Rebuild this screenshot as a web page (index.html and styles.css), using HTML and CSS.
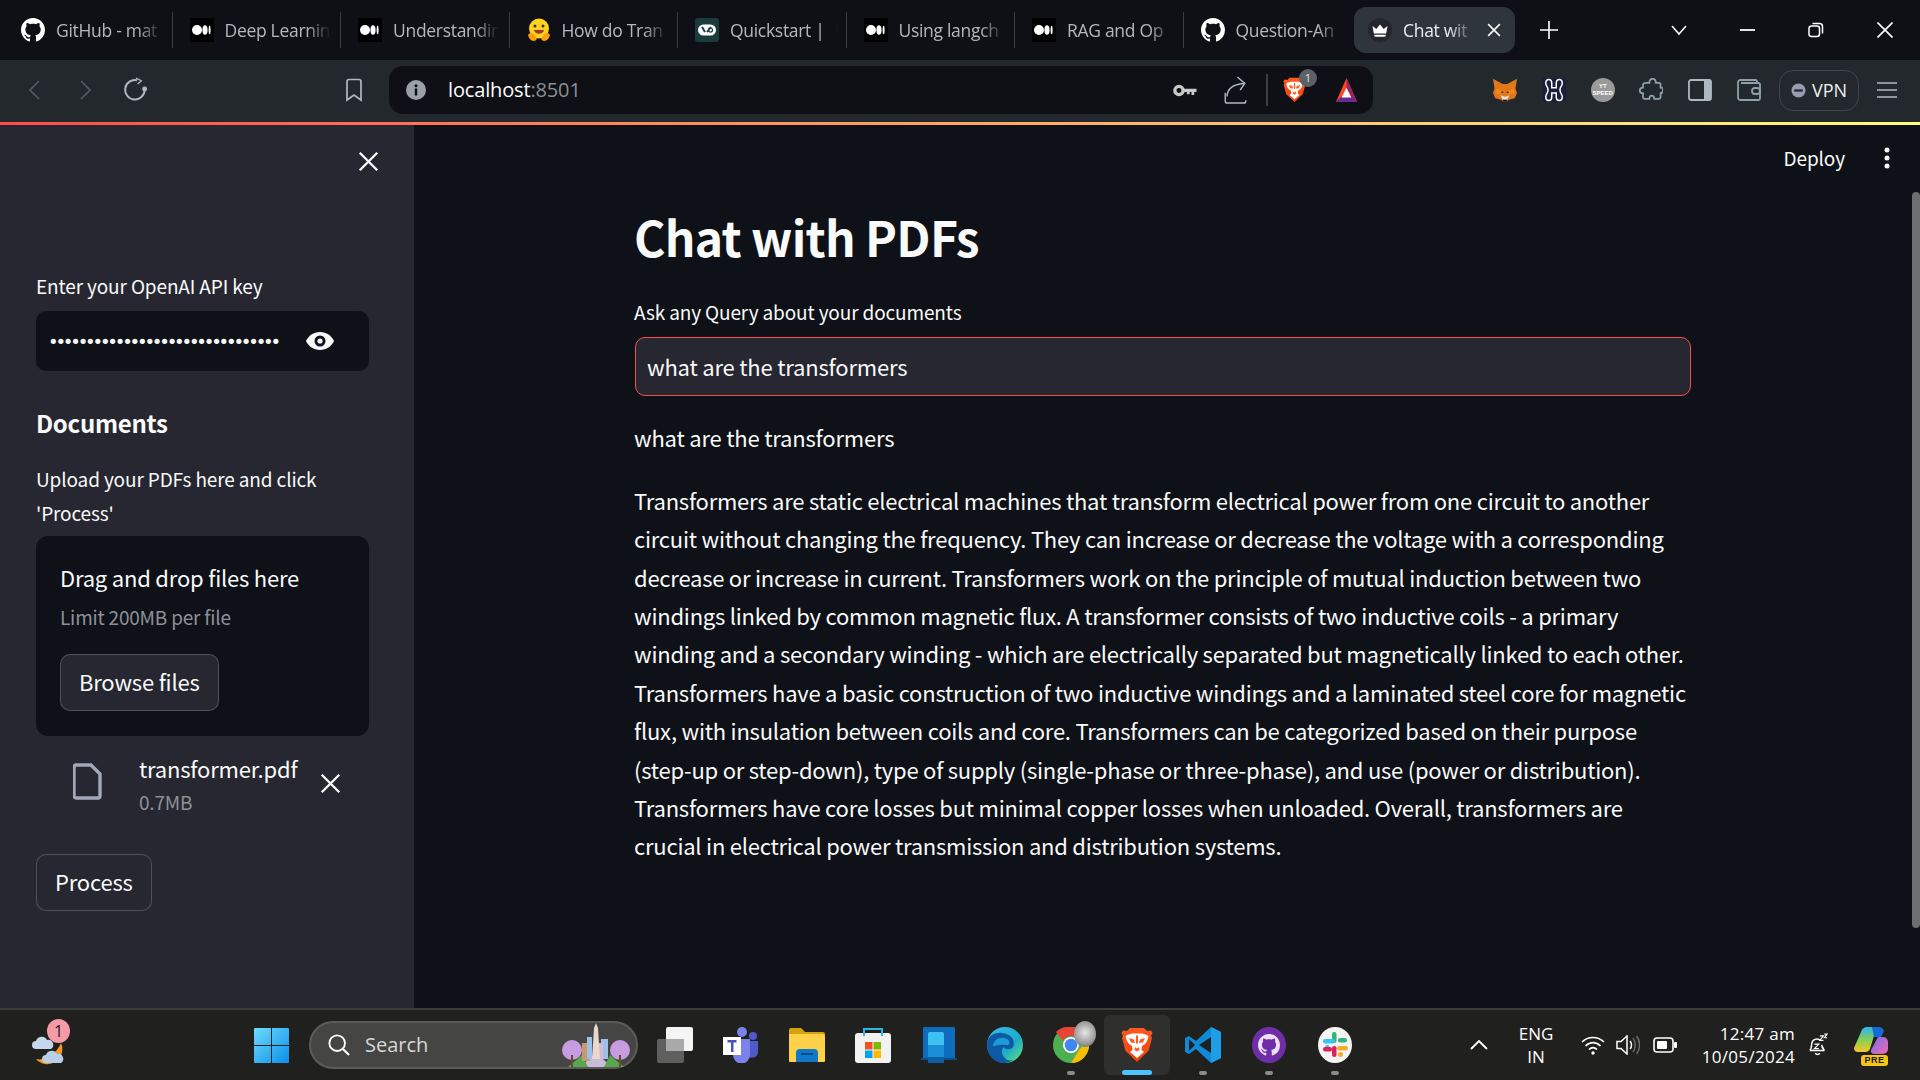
FILE: index.html
```html
<!DOCTYPE html>
<html lang="en">
<head>
<meta charset="utf-8">
<title>Chat with PDFs</title>
<link rel="stylesheet" href="styles.css">
</head>
<body>
<svg class="defs" aria-hidden="true">
  <defs>
    <symbol id="gh" viewBox="0 0 16 16"><path fill="currentColor" d="M8 0C3.58 0 0 3.58 0 8c0 3.54 2.29 6.53 5.47 7.59.4.07.55-.17.55-.38 0-.19-.01-.82-.01-1.49-2.01.37-2.53-.49-2.69-.94-.09-.23-.48-.94-.82-1.13-.28-.15-.68-.52-.01-.53.63-.01 1.08.58 1.23.82.72 1.21 1.87.87 2.33.66.07-.52.28-.87.51-1.07-1.78-.2-3.64-.89-3.64-3.95 0-.87.31-1.59.82-2.15-.08-.2-.36-1.02.08-2.12 0 0 .67-.21 2.2.82.64-.18 1.32-.27 2-.27.68 0 1.36.09 2 .27 1.53-1.04 2.2-.82 2.2-.82.44 1.1.16 1.92.08 2.12.51.56.82 1.27.82 2.15 0 3.07-1.87 3.75-3.65 3.95.29.25.54.73.54 1.48 0 1.07-.01 1.93-.01 2.2 0 .21.15.46.55.38A8.013 8.013 0 0016 8c0-4.42-3.58-8-8-8z"/></symbol>
    <symbol id="medium" viewBox="0 0 24 24"><rect width="24" height="24" fill="#000"/><circle cx="7" cy="12" r="5" fill="#fff"/><ellipse cx="15" cy="12" rx="2.6" ry="4.8" fill="#fff"/><ellipse cx="19.6" cy="12" rx="1" ry="4.3" fill="#fff"/></symbol>
    <symbol id="close" viewBox="0 0 18 18"><path d="M1.500 1.500l15 15M16.500 1.500l-15 15" stroke="currentColor" stroke-width="2" fill="none"/></symbol>
    <symbol id="brave" viewBox="0 0 32 36">
      <defs><linearGradient id="bg1" x1="0" y1="0" x2="0" y2="1"><stop offset="0" stop-color="#ff5a1f"/><stop offset="1" stop-color="#f0420c"/></linearGradient></defs>
      <path fill="url(#bg1)" d="M9 1H23L26 4 30 3.500 31.500 6 30 9 31 11 27.500 24 23 28 16 35 9 28 4.500 24 1 11 2 9 .5 6 2 3.500 6 4Z"/>
      <path fill="#fff" d="M11 6.500H21L26 8 27.500 9.500 26 14 24 17 21 19 20.500 23 23 25 16 31 9 25 11.500 23 11 19 8 17 6 14 4.500 9.500 6 8Z"/>
      <path fill="#ff5a1f" d="M8 11l5 1.500 1 3.500-4-.5zM24 11l-5 1.500-1 3.500 4-.5zM14 20l2 1.500 2-1.500 .5 3-2.500 1.500-2.500-1.500zM16 8v9l-1-1V9zM16 8v9l1-1V9z"/>
    </symbol>
    <symbol id="win" viewBox="0 0 35 35">
      <defs><linearGradient id="wg" x1="0" y1="0" x2="1" y2="1"><stop offset="0" stop-color="#6fdcff"/><stop offset="1" stop-color="#0a8ee8"/></linearGradient></defs>
      <path fill="url(#wg)" d="M1 0H17V17H0V1A1 1 0 011 0ZM18 0H34A1 1 0 0135 1V17H18ZM0 18H17V35H1A1 1 0 010 34ZM18 18H35V34A1 1 0 0134 35H18Z"/>
    </symbol>
  </defs>
</svg>

<div class="tabstrip">
  <div class="tab"><svg class="fav fav-white"><use href="#gh"/></svg><span class="tab-title">GitHub - mat</span></div>
  <div class="tab"><svg class="fav"><use href="#medium"/></svg><span class="tab-title">Deep Learnin</span></div>
  <div class="tab"><svg class="fav"><use href="#medium"/></svg><span class="tab-title">Understandin</span></div>
  <div class="tab">
    <svg class="fav" viewBox="0 0 24 24"><circle cx="12" cy="10.500" r="10" fill="#ffd21e"/><path d="M1 17c2-3 5-2 6 0l3 4c-2 3-7 3-9-4zM23 17c-2-3-5-2-6 0l-3 4c2 3 7 3 9-4z" fill="#ff9d0b"/><circle cx="8" cy="8" r="1.500" fill="#32343d"/><circle cx="16" cy="8" r="1.500" fill="#32343d"/><path d="M7 12c1 5 9 5 10 0z" fill="#a0342e"/></svg>
    <span class="tab-title">How do Tran</span>
  </div>
  <div class="tab">
    <svg class="fav" viewBox="0 0 24 24"><rect width="24" height="24" rx="3" fill="#1c3c3c"/><rect x="3" y="6.500" width="18" height="11" rx="5.500" fill="#fff"/><path d="M7 9l3 5M12 14l4-5" stroke="#1c3c3c" stroke-width="2" fill="none"/><circle cx="15.500" cy="12" r="2" fill="none" stroke="#1c3c3c" stroke-width="1.200"/></svg>
    <span class="tab-title tab-title-q">Quickstart | <span class="tab-mark">!</span></span>
  </div>
  <div class="tab"><svg class="fav"><use href="#medium"/></svg><span class="tab-title">Using langch</span></div>
  <div class="tab"><svg class="fav"><use href="#medium"/></svg><span class="tab-title">RAG and Op</span></div>
  <div class="tab tab-last"><svg class="fav fav-white"><use href="#gh"/></svg><span class="tab-title">Question-An</span></div>
  <div class="tab-active">
    <svg class="fav" viewBox="0 0 24 24"><circle cx="12" cy="12" r="12" fill="#23262c"/><path d="M4.500 8l3.800 3L12 6.500 15.700 11l3.800-3-1.300 7.500H5.800zM6 16.800h12l-.8 2H6.800z" fill="#fff"/></svg>
    <span class="tab-title tab-title-active">Chat wit</span>
    <svg class="tab-x"><use href="#close"/></svg>
  </div>
  <svg class="newtab" viewBox="0 0 18 18"><path d="M9 0v18M0 9h18" stroke="#fff" stroke-width="1.600"/></svg>
  <div class="winctrls">
    <div class="winbtn"><svg class="wicon" viewBox="0 0 16 16"><path d="M1 4l7 8 7-8" stroke="#fff" stroke-width="1.500" fill="none"/></svg></div>
    <div class="winbtn"><svg class="wicon" viewBox="0 0 16 16"><path d="M0 8h15" stroke="#fff" stroke-width="1.800" fill="none"/></svg></div>
    <div class="winbtn"><svg class="wicon" viewBox="0 0 16 16"><rect x="1" y="4" width="10.500" height="10.500" rx="2.500" stroke="#fff" stroke-width="1.500" fill="none"/><path d="M4.500 1.500h7a3 3 0 013 3v7" stroke="#fff" stroke-width="1.500" fill="none"/></svg></div>
    <div class="winbtn"><svg class="wicon" viewBox="0 0 16 16"><path d="M.5.5l15 15M15.500.5l-15 15" stroke="#fff" stroke-width="1.600" fill="none"/></svg></div>
  </div>
</div>

<div class="toolbar">
  <div class="tbtn"><svg class="i24" viewBox="0 0 24 24"><path d="M16 3L7 12l9 9" stroke="#545a60" stroke-width="1.700" fill="none"/></svg></div>
  <div class="tbtn"><svg class="i24" viewBox="0 0 24 24"><path d="M8 3l9 9-9 9" stroke="#545a60" stroke-width="1.700" fill="none"/></svg></div>
  <div class="tbtn tbtn-reload"><svg class="i-reload" viewBox="0 0 24 24"><path d="M20 12A9 9 0 1 1 13 3" stroke="#aeb9bf" stroke-width="1.800" fill="none"/><path d="M12 1l5 2.500-3.500 3" stroke="#aeb9bf" stroke-width="1.200" fill="none"/><circle cx="20" cy="11" r="2.300" fill="#aeb9bf"/></svg></div>
  <div class="tbtn tbtn-bookmark"><svg class="i24" viewBox="0 0 24 24"><path d="M5 3.500a2 2 0 012-2h10a2 2 0 012 2V22l-7-5-7 5z" stroke="#aeb9bf" stroke-width="1.700" fill="none"/></svg></div>
  <div class="urlbar">
    <svg class="urlinfo" viewBox="0 0 20 20"><circle cx="10" cy="10" r="10" fill="#9aa0a6"/><rect x="8.800" y="8.500" width="2.400" height="7" fill="#0e1015"/><circle cx="10" cy="5.800" r="1.500" fill="#0e1015"/></svg>
    <span class="url"><span class="url-host">localhost</span>:8501</span>
    <div class="urlactions">
      <svg class="url-key" viewBox="0 0 26 14"><circle cx="6.500" cy="7" r="4.500" fill="none" stroke="#c9c9c9" stroke-width="3.600"/><path d="M11 5h14.500v3.500H23V12h-3V8.500h-2V11h-3V8.500h-4z" fill="#c9c9c9"/></svg>
      <svg class="url-share" viewBox="0 0 24 30"><path d="M1 18v9a2 2 0 002 2h18a2 2 0 002-2v-1" stroke="#aeb9bf" stroke-width="1.500" fill="none"/><path d="M3 22c0-8 6-13 18-14" stroke="#aeb9bf" stroke-width="1.500" fill="none"/><path d="M14 1l8 7-5 7" stroke="#aeb9bf" stroke-width="1.500" fill="none"/></svg>
      <span class="url-div"></span>
      <span class="shield"><svg class="shield-svg"><use href="#brave"/></svg><span class="shield-badge">1</span></span>
      <svg class="bat" viewBox="0 0 28 32"><path d="M14 0L28 32H0z" fill="#ff4724"/><path d="M14 0L28 32H20L14 18z" fill="#9e1f63"/><path d="M0 32l7-7h14l7 7z" fill="#662d91"/><path d="M14 13l6.500 13h-13z" fill="#fff"/></svg>
    </div>
  </div>
  <div class="exts">
    <div class="ext">
      <svg class="ext-icon" viewBox="0 0 32 30"><path d="M0 0l13 7h6L32 0l-2 13 2 6-3 7-8 2-2 2h-6l-2-2-8-2-3-7 2-6z" fill="#e2761b"/><path d="M5 13l7 3-2 5-7-2zM27 13l-7 3 2 5 7-2z" fill="#f6851b"/><path d="M10 22l6 2 6-2-3 6h-6z" fill="#e4e0dc"/><path d="M12 16l2 3-3 0zM20 16l-2 3 3 0z" fill="#233447"/><path d="M13 28h6l-1 2h-4z" fill="#161616"/></svg>
    </div>
    <div class="ext">
      <svg class="ext-icon" viewBox="0 0 32 32"><rect width="32" height="32" fill="#1a1f3c"/><path d="M9 2C6 2 5 4 5 7c0 4 3 4 3 9s-3 5-3 9c0 3 1 5 4 5s4-2 4-5v-5h6v5c0 3 1 5 4 5s4-2 4-5c0-4-3-4-3-9s3-5 3-9c0-3-1-5-4-5s-4 2-4 5v6h-6V7c0-3-1-5-4-5z" fill="none" stroke="#fff" stroke-width="2"/></svg>
    </div>
    <div class="ext">
      <div class="ytspeed"><span>YT</span><span>SPEED</span></div>
    </div>
    <div class="ext">
      <svg class="ext-icon" viewBox="0 0 30 30"><path d="M9 6h4c0-3 1-5 4-5s4 2 4 5h4a2 2 0 012 2v4c3 0 2 0 3 3 0 2-1 4-3 4v5a2 2 0 01-2 2h-6c0-3-1-4-3-4s-3 2-3 4H7a2 2 0 01-2-2v-5c-3 0-4-1-4-3 0-3 2-4 4-4V8a4 4 0 014-2z" fill="none" stroke="#8ea1ab" stroke-width="2.200"/></svg>
    </div>
    <div class="ext">
      <svg class="ext-icon" viewBox="0 0 24 22"><rect x="1" y="1" width="22" height="20" rx="2" fill="none" stroke="#aeb9bf" stroke-width="1.800"/><rect x="16" y="1" width="7" height="20" fill="#aeb9bf"/></svg>
    </div>
    <div class="ext">
      <svg class="ext-icon" viewBox="0 0 24 22"><path d="M20 4V2.500A1.500 1.500 0 0018.500 1H3.500A2.500 2.500 0 001 3.500v15A2.500 2.500 0 003.500 21h18a1.500 1.500 0 001.500-1.500V5.500A1.500 1.500 0 0021.500 4H4" fill="none" stroke="#8ea1ab" stroke-width="1.800"/><rect x="15" y="9" width="8" height="6" rx="3" fill="#23282c" stroke="#8ea1ab" stroke-width="1.800"/></svg>
    </div>
  </div>
  <div class="vpn"><svg class="vpn-dot" viewBox="0 0 16 16"><circle cx="8" cy="8" r="7.500" fill="#9a9ab5"/><rect x="3.500" y="6.800" width="9" height="2.400" fill="#23282c"/></svg><span>VPN</span></div>
  <div class="menu"><svg class="menu-icon" viewBox="0 0 20 16"><path d="M0 1h20M0 8h20M0 15h20" stroke="#aeb9bf" stroke-width="1.500"/></svg></div>
</div>
<div class="loadbar"></div>

<div class="app">
  <aside class="sidebar">
    <div class="side-top"><svg class="x-icon side-x"><use href="#close"/></svg></div>
    <label class="field-label side-label">Enter your OpenAI API key</label>
    <div class="pwd">
      <span class="pwd-dots">•••••••••••••••••••••••••••••••</span>
      <svg class="eye" viewBox="0 0 30 20"><path d="M15 1C8.500 1 3.500 4.800 1 10c2.500 5.200 7.500 9 14 9s11.500-3.800 14-9C26.500 4.800 21.500 1 15 1z" fill="#fafafa"/><circle cx="15" cy="10" r="5.500" fill="#0e1117"/><circle cx="15" cy="10" r="2.600" fill="#fafafa"/></svg>
    </div>
    <h3 class="side-heading">Documents</h3>
    <p class="side-text">Upload your PDFs here and click 'Process'</p>
    <div class="dropzone">
      <div class="drop-title">Drag and drop files here</div>
      <div class="drop-limit">Limit 200MB per file</div>
      <button class="btn btn-browse" type="button">Browse files</button>
    </div>
    <div class="file">
      <svg class="file-icon" viewBox="0 0 29 37"><path d="M3 2h15l9 9v22a2 2 0 01-2 2H3a2 2 0 01-2-2V4a2 2 0 012-2z" fill="none" stroke="#a3a8b8" stroke-width="3.400"/></svg>
      <div class="file-meta">
        <div class="file-name">transformer.pdf</div>
        <div class="file-size">0.7MB</div>
      </div>
      <svg class="x-icon file-x"><use href="#close"/></svg>
    </div>
    <button class="btn btn-process" type="button">Process</button>
  </aside>
  <main class="main">
    <div class="main-header">
      <span class="deploy">Deploy</span>
      <svg class="kebab" viewBox="0 0 6 22"><circle cx="3" cy="3" r="2.500" fill="#fafafa"/><circle cx="3" cy="11" r="2.500" fill="#fafafa"/><circle cx="3" cy="19" r="2.500" fill="#fafafa"/></svg>
    </div>
    <div class="content">
      <h1 class="title">Chat with PDFs</h1>
      <label class="field-label main-label">Ask any Query about your documents</label>
      <div class="query">what are the transformers</div>
      <p class="echo">what are the transformers</p>
      <p class="answer">Transformers are static electrical machines that transform electrical power from one circuit to another circuit without changing the frequency. They can increase or decrease the voltage with a corresponding decrease or increase in current. Transformers work on the principle of mutual induction between two windings linked by common magnetic flux. A transformer consists of two inductive coils - a primary winding and a secondary winding - which are electrically separated but magnetically linked to each other. Transformers have a basic construction of two inductive windings and a laminated steel core for magnetic flux, with insulation between coils and core. Transformers can be categorized based on their purpose (step-up or step-down), type of supply (single-phase or three-phase), and use (power or distribution). Transformers have core losses but minimal copper losses when unloaded. Overall, transformers are crucial in electrical power transmission and distribution systems.</p>
    </div>
    <div class="scrollbar"></div>
  </main>
</div>

<footer class="taskbar">
  <div class="widget">
    <svg class="widget-icon" viewBox="0 0 38 36"><path d="M30 10A15 15 0 015 26c8 2 20-4 25-16z" fill="#f39a1f"/><path d="M5 16a4 4 0 010-8 6 6 0 0111-1 5 5 0 014 9z" fill="#c6d6ec"/><path d="M15 30a4 4 0 010-8 6 6 0 0111-1 5 5 0 014 9z" fill="#b9cfe9"/></svg>
    <span class="widget-badge">1</span>
  </div>
  <svg class="winlogo"><use href="#win"/></svg>
  <div class="search">
    <svg class="search-icon" viewBox="0 0 24 24"><circle cx="10" cy="10" r="8.500" fill="none" stroke="#fff" stroke-width="2"/><path d="M16 16l7 7" stroke="#fff" stroke-width="2.400"/></svg>
    <span class="search-text">Search</span>
    <svg class="search-art" viewBox="0 0 72 44"><path d="M20 44L36 30l16 14z" fill="#c9bcd6"/><path d="M8 44l14-12 6 12zM64 44L50 32l-6 12z" fill="#57a84c"/><rect x="22" y="20" width="8" height="18" fill="#c79a6b"/><rect x="27" y="14" width="5" height="22" fill="#9cc0e8"/><rect x="41" y="16" width="7" height="20" fill="#9cc0e8"/><rect x="38" y="20" width="5" height="16" fill="#d7b9c9"/><path d="M36 0l2 5 2 31h-8l2-31z" fill="#e7d9cd"/><circle cx="12" cy="27" r="10" fill="#c89ce0"/><circle cx="60" cy="27" r="10" fill="#c89ce0"/><rect x="11" y="32" width="2" height="12" fill="#6b4a2a"/><rect x="59" y="32" width="2" height="12" fill="#6b4a2a"/></svg>
  </div>
  <div class="apps">
    <div class="app-cell"><svg class="app-icon" viewBox="0 0 36 36"><rect y="12" width="27" height="24" rx="2" fill="#5f5f5f"/><rect x="9" width="27" height="24" rx="2" fill="#f5f5f5"/><rect x="9" y="12" width="18" height="12" fill="#a9a9a9"/></svg></div>
    <div class="app-cell"><svg class="app-icon" viewBox="0 0 36 36"><circle cx="19" cy="5" r="5" fill="#7b83eb"/><circle cx="30" cy="9" r="4" fill="#5059c9"/><path d="M26 14h9v11a6 6 0 01-9 5z" fill="#5059c9"/><path d="M10 12h17v16a8.500 8.500 0 01-17 0z" fill="#7b83eb"/><rect y="10" width="18" height="18" fill="#fff"/><path d="M4.500 13h9v2.500h-3V25H8v-9.500H4.500z" fill="#4b53bc"/></svg></div>
    <div class="app-cell"><svg class="app-icon" viewBox="0 0 36 36"><path d="M0 3a2 2 0 012-2h10l4 4h18a2 2 0 012 2v6H0z" fill="#d6a10f"/><path d="M0 7h34a2 2 0 012 2v25a1 1 0 01-1 1H1a1 1 0 01-1-1z" fill="#ffd149"/><path d="M7 35V26a4 4 0 014-4h14a4 4 0 014 4v9z" fill="#0f78c8"/><rect x="12" y="26" width="12" height="2" fill="#0a4f8c"/></svg></div>
    <div class="app-cell"><svg class="app-icon" viewBox="0 0 36 36"><rect y="6" width="36" height="30" rx="3" fill="#f2f2f2"/><path d="M9 9V2h18v7" fill="none" stroke="#29b6ea" stroke-width="2"/><rect x="10" y="15" width="7.500" height="7.500" fill="#f25022"/><rect x="18.500" y="15" width="7.500" height="7.500" fill="#7fba00"/><rect x="10" y="23.500" width="7.500" height="7.500" fill="#00a4ef"/><rect x="18.500" y="23.500" width="7.500" height="7.500" fill="#ffb900"/></svg></div>
    <div class="app-cell"><svg class="app-icon" viewBox="0 0 36 36"><rect x="2" width="32" height="32" rx="1" fill="#0f6cbd"/><rect y="31" width="36" height="2" fill="#0a4f8c"/><rect x="7" y="5" width="16" height="29" rx="2" fill="#3ec1f3"/><rect x="7" y="18" width="16" height="12" fill="#1b8fd6"/><rect x="7" y="30" width="16" height="6" fill="#0c5fa3"/></svg></div>
    <div class="app-cell"><svg class="app-icon" viewBox="0 0 36 36">
      <defs><linearGradient id="eg" x1="0" y1="0" x2="1" y2="1"><stop offset="0" stop-color="#35c1f1"/><stop offset=".6" stop-color="#1fa9c9"/><stop offset="1" stop-color="#66eb6e"/></linearGradient></defs>
      <circle cx="18" cy="18" r="18" fill="url(#eg)"/><path d="M0 18C0 9 8 5 15 6c9 1 14 7 11 14-2 3-8 3-9 0-3 2-3 8 1 11 1 2 4 3 8 2-3 2-6 3-9 3C7 36 0 28 0 18z" fill="#0c59a4"/><path d="M6 20c0-8 8-11 14-8 4 2 3 7-1 6-5-1-13 1-13 2z" fill="#1d9bd6"/></svg></div>
    <div class="app-cell app-running app-chrome">
      <svg class="app-icon" viewBox="0 0 36 36"><circle cx="18" cy="18" r="18" fill="#4caf50"/><path d="M18 0a18 18 0 0115.600 9H18a9 9 0 00-8 5L3 5A18 18 0 0118 0z" fill="#ea4335"/><path d="M33.600 9A18 18 0 0118 36l8-13a9 9 0 000-14z" fill="#fbbc05"/><circle cx="18" cy="18" r="8" fill="#fff"/><circle cx="18" cy="18" r="6.300" fill="#4285f4"/></svg>
      <span class="chrome-avatar"></span>
    </div>
    <div class="app-cell app-active"><svg class="app-icon app-brave"><use href="#brave"/></svg></div>
    <div class="app-cell app-running"><svg class="app-icon" viewBox="0 0 36 36"><path d="M26 0l10 5v26l-10 5-15-14-7 5-4-2V11l4-2 7 5z" fill="#0e8ad6"/><path d="M26 0l10 5v26l-10 5z" fill="#1f9ee8"/><path d="M26 10L14 18l12 8z" fill="#1f2020"/><path d="M4 12v12l6-6z" fill="#1f2020"/></svg></div>
    <div class="app-cell app-running"><svg class="app-icon" viewBox="0 0 34 36"><ellipse cx="17" cy="18" rx="17" ry="18" fill="#6f2da8"/><svg x="6" y="7" width="22" height="22" viewBox="0 0 16 16" color="#ebe0f3"><use href="#gh"/></svg></svg></div>
    <div class="app-cell app-running"><svg class="app-icon" viewBox="0 0 36 36"><ellipse cx="18" cy="18" rx="17" ry="18" fill="#f4f4f2"/><rect x="15" y="5" width="4.500" height="11" rx="2.200" fill="#2eb67d"/><rect x="21" y="11" width="9" height="4.500" rx="2.200" fill="#2eb67d"/><rect x="6" y="12" width="12" height="4.500" rx="2.200" fill="#36c5f0"/><rect x="8" y="18" width="4.500" height="4.500" rx="2" fill="#36c5f0"/><rect x="15" y="19" width="4.500" height="11" rx="2.200" fill="#e01e5a"/><rect x="6" y="20" width="9" height="4.500" rx="2.200" fill="#e01e5a"/><rect x="20" y="19" width="11" height="4.500" rx="2.200" fill="#ecb22e"/><rect x="21" y="25" width="5" height="5" rx="2.200" fill="#ecb22e"/></svg></div>
  </div>
  <div class="tray">
    <svg class="tray-chevron" viewBox="0 0 18 10"><path d="M1 9l8-8 8 8" fill="none" stroke="#fff" stroke-width="1.800"/></svg>
    <div class="lang"><span>ENG</span><span>IN</span></div>
    <svg class="tray-wifi" viewBox="0 0 24 20"><path d="M1 7c6-6 16-6 22 0M4.500 11c4.500-4.500 10.500-4.500 15 0M8 14.500c2.500-2.500 5.500-2.500 8 0" fill="none" stroke="#fff" stroke-width="1.700"/><circle cx="12" cy="18" r="1.700" fill="#fff"/></svg>
    <svg class="tray-vol" viewBox="0 0 24 20"><path d="M1 6.500h4L11 1v18l-6-5.500H1z" fill="none" stroke="#fff" stroke-width="1.500"/><path d="M14 6c2 2 2 6 0 8" fill="none" stroke="#fff" stroke-width="1.500"/><path d="M17 3c3 4 3 10 0 14M20.500 1c4 5 4 13 0 18" fill="none" stroke="#6a6a68" stroke-width="1.500"/></svg>
    <svg class="tray-batt" viewBox="0 0 24 16"><rect x="1" y="1" width="19" height="14" rx="3" fill="none" stroke="#fff" stroke-width="1.600"/><rect x="4" y="4" width="10" height="8" rx="1" fill="#fff"/><rect x="21" y="5" width="3" height="6" rx="1" fill="#fff"/></svg>
    <div class="clock"><span>12:47 am</span><span>10/05/2024</span></div>
    <svg class="tray-bell" viewBox="0 0 22 24"><path d="M2 18c2-2 2-4 2-7a6 6 0 0110-4M15 12c0 3 1 4 3 6zM2 18h16M8 21a3 3 0 005 0" fill="none" stroke="#fff" stroke-width="1.600"/><path d="M13 2h4l-4 5h4M18 0h3l-3 4h3M7 11h5l-5 5h5" fill="none" stroke="#fff" stroke-width="1.300"/></svg>
    <div class="copilot">
      <svg class="copilot-icon" viewBox="0 0 34 30">
        <defs><linearGradient id="cg1" x1="0" y1="0" x2="0" y2="1"><stop offset="0" stop-color="#2ab7f0"/><stop offset=".55" stop-color="#8ed04d"/><stop offset="1" stop-color="#f7c531"/></linearGradient><linearGradient id="cg2" x1="0" y1="0" x2="1" y2="1"><stop offset="0" stop-color="#7a6cf0"/><stop offset="1" stop-color="#f06bb0"/></linearGradient></defs>
        <path d="M12 0h12l-2 2-6 20a5 5 0 01-5 3H4a4 4 0 01-4-4L7 5a7 7 0 015-5z" fill="url(#cg1)"/><path d="M18 0h6a6 6 0 016 4l-3 6H20z" fill="#1769d6"/><path d="M24 10h5a5 5 0 015 5v7a5 5 0 01-5 5h-9a3 3 0 01-3-4z" fill="url(#cg2)"/>
      </svg>
      <span class="pre">PRE</span>
    </div>
  </div>
</footer>
</body>
</html>
```

FILE: styles.css
```css
* { box-sizing: border-box; }
html, body { margin: 0; padding: 0; height: 100%; }
body {
  width: 1920px;
  height: 1080px;
  display: flex;
  flex-direction: column;
  overflow: hidden;
  background: #0e1117;
  color: #fafafa;
  font-family: "Noto Sans CJK JP", "Noto Sans", sans-serif;
}
.defs { width: 0; height: 0; position: absolute; }

/* tab strip */
.tabstrip {
  height: 60px;
  flex: none;
  display: flex;
  align-items: center;
  padding-left: 4px;
  background: #0e1015;
}
.tab {
  width: 168.5px;
  height: 36px;
  flex: none;
  display: flex;
  align-items: center;
  gap: 11px;
  padding-left: 17px;
  border-right: 1px solid #3a3d42;
}
.tab-last { border-right: 0; }
.fav { width: 24px; height: 24px; flex: none; }
.fav-white { color: #fff; }
.tab-title {
  flex: 1;
  white-space: nowrap;
  font: 400 17.5px/24px "Open Sans", sans-serif;
  letter-spacing: -.3px;
  color: #b4b8bd;
  -webkit-mask-image: linear-gradient(to right, #000 82px, transparent 106px);
  mask-image: linear-gradient(to right, #000 82px, transparent 106px);
}
.tab-title-q {
  -webkit-mask-image: linear-gradient(to right, #000 98px, transparent 108px);
  mask-image: linear-gradient(to right, #000 98px, transparent 108px);
}
.tab-mark { margin-left: 7px; color: #ff1f7a; font-weight: 700; }
.tab-active {
  width: 161px;
  height: 46px;
  flex: none;
  margin-left: 2px;
  display: flex;
  align-items: center;
  gap: 11px;
  padding: 0 14px 0 14px;
  background: #2f363b;
  border-radius: 12px;
}
.tab-title-active {
  color: #eceeef;
  -webkit-mask-image: linear-gradient(to right, #000 45px, transparent 72px);
  mask-image: linear-gradient(to right, #000 45px, transparent 72px);
}
.tab-x { width: 14px; height: 14px; color: #fff; flex: none; }
.newtab { width: 18px; height: 18px; margin-left: 25px; flex: none; }
.winctrls { margin-left: auto; display: flex; margin-right: 1px; }
.winbtn { width: 68.5px; display: flex; justify-content: center; align-items: center; }
.wicon { width: 16px; height: 16px; }

/* toolbar */
.toolbar {
  height: 62px;
  flex: none;
  display: flex;
  align-items: center;
  padding-left: 10px;
  padding-bottom: 2px;
  background: #23282c;
}
.tbtn { width: 50px; height: 48px; flex: none; display: flex; align-items: center; justify-content: center; }
.tbtn-reload { padding-left: 2px; }
.i24 { width: 24px; height: 24px; }
.i-reload { width: 26px; height: 26px; }
.tbtn-bookmark { margin-left: 169px; }
.urlbar {
  width: 984px;
  height: 48px;
  flex: none;
  margin-left: 10px;
  padding-left: 17px;
  display: flex;
  align-items: center;
  background: #0e1015;
  border-radius: 14px;
}
.urlinfo { width: 20px; height: 20px; flex: none; }
.url { margin-left: 22px; font: 400 20px/28px "Open Sans", sans-serif; letter-spacing: -.15px; color: #8b8f94; }
.url-host { color: #fff; }
.urlactions { margin-left: auto; display: flex; align-items: center; padding-right: 13px; }
.url-key { width: 24px; height: 13px; }
.url-share { width: 23px; height: 28px; margin-left: 27px; }
.url-div { width: 2px; height: 32px; margin-left: 19px; background: #3c4045; }
.shield { position: relative; display: flex; margin-left: 15px; }
.shield-svg { width: 23px; height: 36px; }
.shield-badge {
  position: absolute;
  top: -3px;
  left: 16px;
  width: 18px;
  height: 18px;
  border-radius: 50%;
  background: #5c6067;
  color: #e8e8e8;
  font: 400 11px/18px "Open Sans", sans-serif;
  text-align: center;
}
.bat { width: 27px; height: 24px; margin-left: 27px; }

.exts { margin-left: 108px; display: flex; flex: none; }
.ext { width: 48.7px; height: 32px; flex: none; display: flex; justify-content: center; align-items: center; }
.ext-icon { width: 24px; height: 24px; }
.ytspeed {
  width: 24px;
  height: 24px;
  border-radius: 50%;
  background: #9a9a9a;
  color: #fff;
  display: flex;
  flex-direction: column;
  align-items: center;
  justify-content: center;
  font: 700 6px/7px "Liberation Sans", sans-serif;
}
.vpn {
  width: 80px;
  height: 41px;
  flex: none;
  margin-left: 6px;
  display: flex;
  align-items: center;
  justify-content: center;
  gap: 6px;
  border: 1px solid #3e464c;
  border-radius: 14px;
  font: 400 18px/24px "Open Sans", sans-serif;
  color: #eef0f1;
}
.vpn-dot { width: 15px; height: 15px; }
.menu { width: 48px; margin-left: 4px; display: flex; justify-content: center; }
.menu-icon { width: 20px; height: 16px; }
.loadbar { height: 3px; flex: none; background: linear-gradient(90deg, #ff4b4b, #fffd80); }

/* streamlit app */
.app { height: 883px; flex: none; display: flex; }
.sidebar {
  width: 414px;
  flex: none;
  padding-left: 36px;
  padding-right: 45px;
  background: #262730;
  display: flex;
  flex-direction: column;
  align-items: stretch;
}
.side-top { margin-top: 26px; height: 20px; display: flex; justify-content: flex-end; }
.x-icon { width: 21px; height: 21px; color: #fafafa; flex: none; }
.side-x { margin-right: -10px; }
.field-label { display: block; font-size: 19px; line-height: 30px; letter-spacing: -.13px; color: #fafafa; }
.side-label { margin-top: 100px; margin-bottom: 1px; }
.pwd {
  margin-top: 9px;
  height: 60px;
  padding: 0 0 0 12px;
  display: flex;
  align-items: center;
  background: #0e1117;
  border-radius: 10px;
}
.pwd-dots {
  width: 234px;
  white-space: nowrap;
  padding-top: 2px;
  font: 400 18px/20px "DejaVu Sans", sans-serif;
  letter-spacing: -3.2px;
  color: #fafafa;
}
.eye { width: 30px; height: 20px; margin-left: 23px; }
.side-heading { margin: 34px 0 0; font-size: 24px; line-height: 36px; font-weight: 600; letter-spacing: -.3px; }
.side-text { margin: 21px 0 0; font-size: 19px; line-height: 34px; letter-spacing: -.13px; }
.dropzone {
  margin-top: 6px;
  height: 200px;
  padding: 23px 24px 0;
  background: #0e1117;
  border-radius: 12px;
}
.drop-title { font-size: 22px; line-height: 36px; letter-spacing: -.2px; }
.drop-limit { margin-top: 7px; font-size: 19px; line-height: 30px; color: #8d9097; letter-spacing: -.2px; }
.btn {
  display: block;
  height: 57px;
  padding: 0 18px 3px;
  background: #262730;
  border: 1px solid rgba(250, 250, 250, .2);
  border-radius: 10px;
  color: #fafafa;
  font-family: inherit;
  font-size: 22px;
  line-height: 28px;
  letter-spacing: -.2px;
}
.btn-browse { margin-top: 22px; }
.file { height: 66px; display: flex; align-items: center; padding: 0 30px 0 37px; margin-top: 15px; }
.file-icon { width: 29px; height: 37px; flex: none; margin-top: -5px; }
.file-meta { margin-left: 37px; }
.file-name { font-size: 22px; line-height: 34px; letter-spacing: -.2px; }
.file-size { margin-top: 2px; font-size: 19px; line-height: 30px; color: #8d9097; letter-spacing: -.2px; }
.file-x { margin-left: auto; margin-top: -2px; margin-right: -2px; }
.btn-process { margin-top: 37px; align-self: flex-start; }

.main { flex: 1; position: relative; display: flex; flex-direction: column; background: #0e1117; }
.main-header {
  height: 66px;
  flex: none;
  display: flex;
  align-items: center;
  justify-content: flex-end;
  padding-right: 30px;
  gap: 39px;
}
.deploy { padding-bottom: 1px; font-size: 19px; line-height: 30px; font-weight: 400; letter-spacing: -.1px; }
.kebab { width: 6px; height: 22px; }
.content { padding: 0 229px 0 220px; }
.title { margin: 13px 0 0; font-size: 48px; line-height: 64px; font-weight: 600; letter-spacing: -.75px; }
.main-label { margin-top: 29px; }
.query {
  margin-top: 10px;
  margin-left: 1px;
  height: 59px;
  padding: 0 12px 2px 11px;
  display: flex;
  align-items: center;
  background: #262730;
  border: 1px solid #ff4b4b;
  border-radius: 10px;
  font-size: 22px;
  letter-spacing: -.2px;
}
.echo { margin: 22px 0 0; font-size: 22px; line-height: 38.4px; letter-spacing: -.2px; }
.answer { margin: 24.4px 0 0; font-size: 22px; line-height: 38.4px; letter-spacing: -.235px; }
.scrollbar {
  position: absolute;
  top: 67px;
  right: 0;
  width: 8px;
  height: 736px;
  border-radius: 4px;
  background: #6d6f73;
}

/* taskbar */
.taskbar {
  height: 72px;
  flex: none;
  display: flex;
  align-items: center;
  background: #20211e;
  border-top: 2px solid #3d3e3b;
}
.widget { width: 40px; height: 36px; position: relative; margin-left: 28px; flex: none; }
.widget-icon { width: 38px; height: 36px; margin-top: 6px; margin-left: 3px; display: block; }
.widget-badge {
  position: absolute;
  top: -8px;
  left: 19px;
  width: 23px;
  height: 24px;
  border-radius: 50%;
  background: #f79aa8;
  color: #1a1a1a;
  font: 400 16px/24px "Open Sans", sans-serif;
  text-align: center;
}
.winlogo { width: 35px; height: 35px; margin-left: 186px; flex: none; }
.search {
  width: 329px;
  height: 48px;
  flex: none;
  margin-left: 20px;
  padding: 0 2px 0 17px;
  display: flex;
  align-items: center;
  background: #454643;
  border: 2px solid #5b5c59;
  border-radius: 24px;
}
.search-icon { width: 22px; height: 22px; flex: none; }
.search-text { margin-left: 15px; font: 400 20px/28px "Open Sans", sans-serif; color: #d8d8d6; }
.search-art { width: 76px; height: 44px; margin-left: auto; }
.apps { display: flex; margin-left: 4px; flex: none; }
.app-cell { width: 66px; height: 60px; flex: none; position: relative; display: flex; align-items: center; justify-content: center; }
.app-icon { width: 36px; height: 36px; }
.app-brave { width: 32px; height: 36px; }
.app-running::after {
  content: "";
  position: absolute;
  bottom: 0;
  left: 29px;
  width: 8px;
  height: 4px;
  border-radius: 2px;
  background: #8a8a88;
}
.app-active { background: #2f302e; border-radius: 6px; }
.app-active::after {
  content: "";
  position: absolute;
  bottom: 0;
  left: 18px;
  width: 30px;
  height: 5px;
  border-radius: 3px;
  background: #4cc2ff;
}
.chrome-avatar {
  position: absolute;
  top: 6px;
  right: 8px;
  width: 22px;
  height: 26px;
  border-radius: 50%;
  background: radial-gradient(circle at 50% 45%, #e8e8e8 0, #9a9a9a 60%, #5a5a5a 100%);
}
.tray { display: flex; align-items: center; flex: none; margin-left: 96px; color: #fff; }
.tray-chevron { width: 18px; height: 10px; margin: 0 6px; }
.lang {
  width: 50px;
  margin-left: 17px;
  display: flex;
  flex-direction: column;
  align-items: center;
  font: 400 17px/23px "Open Sans", sans-serif;
}
.tray-wifi { width: 24px; height: 20px; margin-left: 20px; }
.tray-vol { width: 24px; height: 20px; margin-left: 11px; }
.tray-batt { width: 24px; height: 16px; margin-left: 13px; }
.clock {
  width: 105px;
  margin-left: 13px;
  display: flex;
  flex-direction: column;
  align-items: flex-end;
  font: 400 17px/23px "Open Sans", sans-serif;
  letter-spacing: .3px;
}
.tray-bell { width: 20px; height: 24px; margin-left: 13px; }
.copilot { width: 36px; height: 36px; margin-left: 26px; position: relative; }
.copilot-icon { width: 34px; height: 30px; display: block; }
.pre {
  position: absolute;
  left: 7px;
  bottom: -3px;
  width: 27px;
  height: 11px;
  border-radius: 3px;
  background: #f5c518;
  color: #1a1a1a;
  font: 700 9px/11px "Liberation Sans", sans-serif;
  text-align: center;
  letter-spacing: .5px;
}
```
